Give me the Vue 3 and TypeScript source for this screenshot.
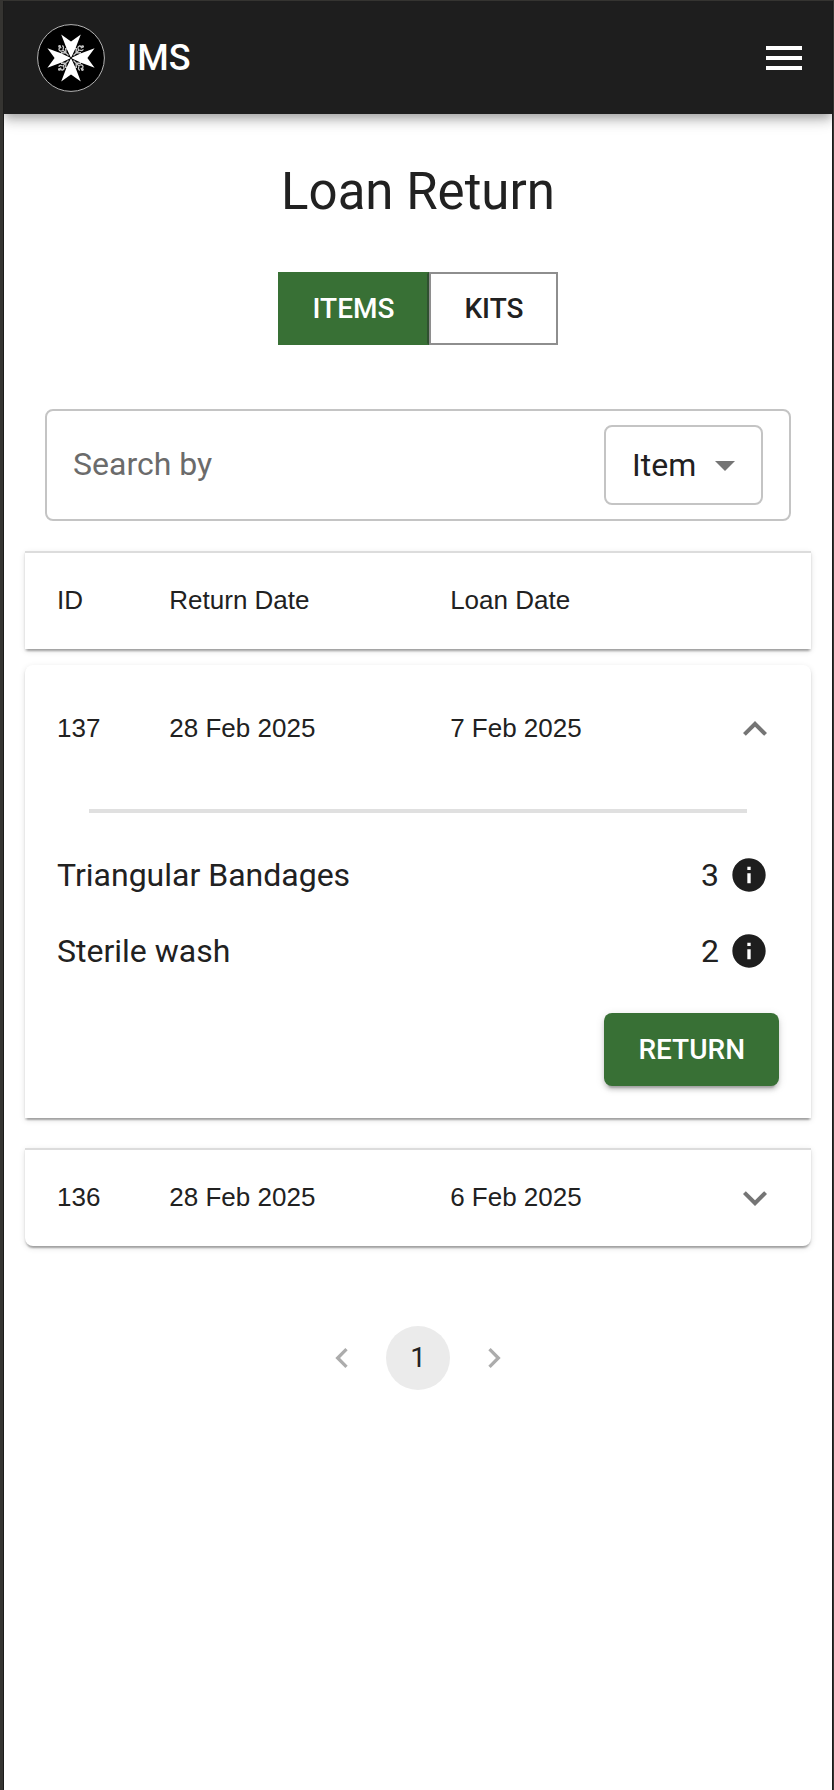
<script setup lang="ts">
import { ref } from 'vue'

interface LoanItem {
  name: string
  quantity: number
}

interface Loan {
  id: number
  returnDate: string
  loanDate: string
  items: LoanItem[]
}

const views = ['Items', 'Kits']
const activeView = ref('Items')
const query = ref('')
const searchField = ref('Item')
const expandedId = ref<number | null>(137)

const loans: Loan[] = [
  {
    id: 137,
    returnDate: '28 Feb 2025',
    loanDate: '7 Feb 2025',
    items: [
      { name: 'Triangular Bandages', quantity: 3 },
      { name: 'Sterile wash', quantity: 2 },
    ],
  },
  { id: 136, returnDate: '28 Feb 2025', loanDate: '6 Feb 2025', items: [] },
]

const quarterTurns = [0, 90, 180, 270]

function toggle(id: number): void {
  expandedId.value = expandedId.value === id ? null : id
}
</script>

<template>
  <div class="frame">
    <div class="page">
      <header class="app-bar">
        <svg class="logo" viewBox="0 0 68 68" aria-hidden="true">
          <circle cx="34" cy="34" r="33.4" fill="#000" stroke="#b4b4b4" stroke-width="1" />
          <g
            v-for="turn in quarterTurns"
            :key="'o' + turn"
            :transform="`rotate(${turn} 34 34)`"
            fill="none"
            stroke="#c8c8c8"
            stroke-width="1.3"
          >
            <path d="M36.5 31.5 L42.4 25.6 M39 29 l.4 -5 M39 29 l5 -.4 M41.5 26 q-1.4 -3 .8 -4 q2.4 -.2 2 2.4 M42.5 26 q2.8 1.4 3.8 -.8 M42.6 29.8 q2 1.8 4 -.6 M38.4 25 q-1.6 -1.8 .6 -3.6" />
            <circle cx="45.6" cy="22.6" r=".8" />
          </g>
          <path
            v-for="turn in quarterTurns"
            :key="turn"
            :transform="`rotate(${turn} 34 34)`"
            d="M34 34 L29.6 24.5 L24.2 10.4 L34 17.6 L43.8 10.4 L38.4 24.5 Z"
            fill="#fff"
          />
          <path d="M32.6 32.6 L35.4 35.4 M35.4 32.6 L32.6 35.4" stroke="#000" stroke-width=".7" />
        </svg>
        <span class="brand">IMS</span>
        <button class="menu" type="button" aria-label="Open menu">
          <svg viewBox="0 0 24 24" aria-hidden="true">
            <path d="M3 18h18v-2H3v2zm0-5h18v-2H3v2zm0-7v2h18V6H3z" />
          </svg>
        </button>
      </header>

      <main>
        <h1>Loan Return</h1>

        <div class="toggle-group" role="group" aria-label="Loan type">
          <button
            v-for="view in views"
            :key="view"
            type="button"
            class="toggle"
            :class="{ active: activeView === view }"
            :aria-pressed="activeView === view"
            @click="activeView = view"
          >
            {{ view }}
          </button>
        </div>

        <div class="search">
          <input v-model="query" type="text" placeholder="Search by" aria-label="Search by" />
          <div class="field-select">
            <select v-model="searchField" aria-label="Search field">
              <option>Item</option>
              <option>ID</option>
            </select>
            <svg viewBox="0 0 24 24" aria-hidden="true"><path d="M7 10l5 5 5-5z" /></svg>
          </div>
        </div>

        <section class="loans" aria-label="Loans">
          <div class="card ruled head">
            <div class="summary">
              <span>ID</span>
              <span>Return Date</span>
              <span>Loan Date</span>
            </div>
          </div>

          <article
            v-for="loan in loans"
            :key="loan.id"
            class="card"
            :class="expandedId === loan.id ? 'open' : 'ruled'"
          >
            <button
              type="button"
              class="summary"
              :aria-expanded="expandedId === loan.id"
              @click="toggle(loan.id)"
            >
              <span>{{ loan.id }}</span>
              <span>{{ loan.returnDate }}</span>
              <span>{{ loan.loanDate }}</span>
              <svg class="chevron" viewBox="0 0 24 24" aria-hidden="true">
                <path d="M16.59 8.59 12 13.17 7.41 8.59 6 10l6 6 6-6z" />
              </svg>
            </button>
            <div v-if="expandedId === loan.id" class="details">
              <hr />
              <ul>
                <li v-for="item in loan.items" :key="item.name">
                  <span class="name">{{ item.name }}</span>
                  <span>{{ item.quantity }}</span>
                  <button type="button" class="info" :aria-label="`About ${item.name}`">
                    <svg viewBox="0 0 24 24" aria-hidden="true">
                      <path d="M12 2C6.48 2 2 6.48 2 12s4.48 10 10 10 10-4.48 10-10S17.52 2 12 2zm1 15h-2v-6h2v6zm0-8h-2V7h2v2z" />
                    </svg>
                  </button>
                </li>
              </ul>
              <button type="button" class="return">Return</button>
            </div>
          </article>
        </section>

        <nav class="pagination" aria-label="Pagination">
          <button type="button" disabled aria-label="Previous page">
            <svg viewBox="0 0 24 24" aria-hidden="true"><path d="M15.41 7.41 14 6l-6 6 6 6 1.41-1.41L10.83 12z" /></svg>
          </button>
          <button type="button" class="current" aria-current="page">1</button>
          <button type="button" disabled aria-label="Next page">
            <svg viewBox="0 0 24 24" aria-hidden="true"><path d="M10 6 8.59 7.41 13.17 12l-4.58 4.59L10 18l6-6z" /></svg>
          </button>
        </nav>
      </main>
    </div>
  </div>
</template>

<style>
body {
  background: #fff;
}
</style>

<style scoped>
* {
  box-sizing: border-box;
}

button,
input,
select {
  margin: 0;
  padding: 0;
  border: 0;
  background: none;
  color: inherit;
  font: inherit;
}

button:not(:disabled),
select {
  cursor: pointer;
}

svg {
  display: block;
  flex: none;
  fill: currentColor;
}

.frame {
  display: flex;
  min-height: 100vh;
  border: solid #353431;
  border-width: 1px 1px 0 3px;
  background: #1b1b1a;
  padding: 0 1px;
  color: #212121;
  font-family: Roboto, "Liberation Sans", sans-serif;
  font-size: 32px;
  line-height: 48px;
}

.page {
  flex: 1;
  min-width: 0;
  overflow: hidden;
  background: #fff;
}

.app-bar {
  display: flex;
  align-items: center;
  height: 113px;
  padding: 0 24px 0 33px;
  background: #1e1e1e;
  color: #fff;
  box-shadow: 0 4px 8px -2px rgba(0, 0, 0, 0.2), 0 8px 10px rgba(0, 0, 0, 0.14), 0 2px 20px rgba(0, 0, 0, 0.12);
}

.logo {
  width: 68px;
  height: 68px;
}

.brand {
  flex: 1;
  margin-left: 22px;
  font-size: 36px;
  font-weight: 500;
}

.menu svg {
  width: 48px;
  height: 48px;
}

main {
  padding: 46px 21px 48px;
}

h1 {
  margin: 0;
  font-size: 51px;
  font-weight: 400;
  line-height: 64px;
  text-align: center;
}

.toggle-group {
  display: flex;
  justify-content: center;
  margin-top: 48px;
}

.toggle {
  padding: 12px 33px;
  border: 2px solid #8e8e8e;
  font-size: 28px;
  font-weight: 500;
  line-height: 45px;
  text-transform: uppercase;
}

.toggle.active {
  border-color: #387035 #2f5030 #387035 #387035;
  background: #387035;
  color: #fff;
}

.search {
  display: flex;
  align-items: center;
  margin: 64px 20px 30px;
  padding: 14px 26px;
  border: 2px solid #c4c4c4;
  border-radius: 8px;
}

.search input {
  flex: 1;
  min-width: 0;
  height: 48px;
  padding-bottom: 2px;
  outline: none;
}

.search input::placeholder {
  color: #6b6b6b;
  opacity: 1;
}

.field-select {
  display: grid;
  align-items: center;
}

.field-select > * {
  grid-area: 1 / 1;
}

.field-select select {
  height: 80px;
  padding: 0 64px 0 26px;
  border: 2px solid #c4c4c4;
  border-radius: 8px;
  appearance: none;
}

.field-select svg {
  justify-self: end;
  width: 48px;
  height: 48px;
  margin-right: 14px;
  color: #757575;
  pointer-events: none;
}

.card {
  background: #fff;
  font-family: "Liberation Sans", Arial, sans-serif;
  font-size: 26px;
  line-height: 40px;
  box-shadow: 0 4px 2px -2px rgba(0, 0, 0, 0.2), 0 2px 2px rgba(0, 0, 0, 0.14), 0 2px 6px rgba(0, 0, 0, 0.12);
}

.ruled {
  border-top: 2px solid #dcdcdc;
}

.card:last-child {
  border-radius: 0 0 8px 8px;
}

.open {
  border-radius: 8px 8px 0 0;
}

.head + .card {
  margin-top: 16px;
}

.card + .card:last-child {
  margin-top: 30px;
}

.summary {
  display: grid;
  grid-template-columns: 2fr 5fr 5fr 48px;
  align-items: center;
  width: 100%;
  min-height: 96px;
  padding: 0 32px;
  text-align: left;
}

.summary span {
  padding-bottom: 2px;
}

.open .summary {
  min-height: 128px;
}

.chevron {
  width: 48px;
  height: 48px;
  color: #757575;
}

.open .chevron {
  transform: rotate(180deg);
}

.details {
  display: flex;
  flex-direction: column;
  padding: 16px 32px 32px;
  font-family: Roboto, "Liberation Sans", sans-serif;
  font-size: 32px;
  line-height: 48px;
}

hr {
  width: calc(100% - 64px);
  height: 4px;
  margin: 0 auto 24px 32px;
  border: 0;
  background: #e0e0e0;
}

ul {
  margin: 0;
  padding: 0;
  list-style: none;
}

li {
  display: flex;
  align-items: center;
  height: 76px;
  padding-right: 10px;
}

.name {
  flex: 1;
}

.info {
  margin-left: 10px;
  color: #1e1e1e;
}

.info svg {
  width: 40px;
  height: 40px;
}

.return {
  align-self: flex-end;
  margin-top: 24px;
  padding: 12px 34px;
  border-radius: 8px;
  background: #387035;
  color: #fff;
  font-size: 28px;
  font-weight: 500;
  line-height: 49px;
  text-transform: uppercase;
  box-shadow: 0 6px 2px -4px rgba(0, 0, 0, 0.2), 0 4px 4px rgba(0, 0, 0, 0.14), 0 2px 10px rgba(0, 0, 0, 0.12);
}

.pagination {
  display: flex;
  justify-content: center;
  gap: 12px;
  margin-top: 80px;
  font-size: 28px;
}

.pagination button {
  display: grid;
  place-items: center;
  width: 64px;
  height: 64px;
  border-radius: 50%;
}

.pagination button:disabled {
  color: #acacac;
}

.pagination .current {
  background: #ebebeb;
}

.pagination svg {
  width: 40px;
  height: 40px;
}
</style>
